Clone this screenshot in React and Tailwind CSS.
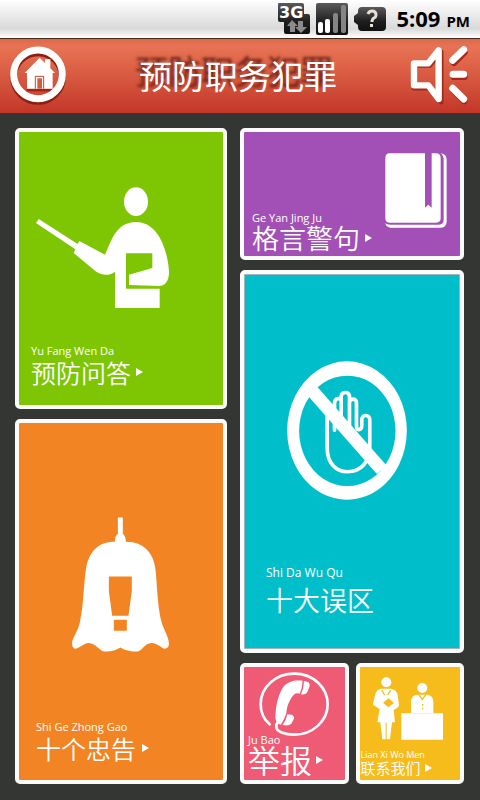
const CJK = "font-['Noto_Sans_CJK_SC','Noto_Sans',sans-serif]";
const LATIN = "font-['Open_Sans','Noto_Sans',sans-serif]";

function StatusBar() {
  return (
    <div className="flex h-[38px] items-center justify-end bg-linear-to-b from-white via-[#dadada] via-75% to-white pr-[10px]">
      <svg width="32" height="32" viewBox="0 0 32 32" className="mr-[6px]" aria-label="3G">
        <defs>
          <linearGradient id="dark" x1="0" y1="0" x2="0" y2="1">
            <stop offset="0" stopColor="#5a5a5a" />
            <stop offset="0.6" stopColor="#1e1e1e" />
            <stop offset="1" stopColor="#111" />
          </linearGradient>
        </defs>
        <path d="M1 0h23q2 0 2 2v9h4q2 0 2 2v16q0 2-2 2H8q-2 0-2-2V19H2q-2 0-2-2V1q0-1 1-1z" fill="url(#dark)" />
        <text x="1" y="15" fontFamily="DejaVu Sans" fontWeight="bold" fontSize="16" fill="#fff">3G</text>
        <path d="M14 17l6 6h-3v6h-5v-6H9z" fill="#8b8b8b" />
        <path d="M23 30l-6-6h3v-6h5v6h4z" fill="#8b8b8b" />
      </svg>
      <svg width="32" height="32" viewBox="0 0 32 32" className="mr-[6px]" aria-label="Signal">
        <rect width="32" height="32" rx="2" fill="url(#dark)" />
        <rect x="2" y="19" width="5" height="11" rx="2" fill="#fff" />
        <rect x="9" y="16" width="5" height="14" rx="2" fill="#fff" />
        <rect x="17" y="10" width="5" height="20" rx="2" fill="#858585" />
        <rect x="25" y="2" width="5" height="28" rx="2" fill="#858585" />
      </svg>
      <svg width="32" height="24" viewBox="0 0 32 24" className="mr-[10px]" aria-label="Battery unknown">
        <path d="M8 0H28Q32 0 32 4V20Q32 24 28 24H8Q4 24 4 20V18L0 15V9L4 6V4Q4 0 8 0z" fill="url(#dark)" />
        <path d="M14 7Q15 4 18 4Q22 4 22 8Q22 10 20 11Q18 12 18 15" fill="none" stroke="#e8e0d4" strokeWidth="3" />
        <rect x="16" y="17" width="3" height="3" fill="#e8e0d4" />
      </svg>
      <div className={"flex items-baseline gap-[6px] font-bold text-black " + LATIN}>
        <span className="text-[22px] leading-8">5:09</span>
        <span className="text-[15px] leading-8">PM</span>
      </div>
    </div>
  );
}

function Header() {
  return (
    <header className="flex h-[75px] items-center justify-between border-t border-[#4a2a18] bg-linear-to-b from-[#d96a4c] via-[#e87354] via-10% to-[#c33628] pr-[11px] pl-[10px]">
      <button type="button" aria-label="Home">
        <svg width="56" height="60" viewBox="30 137 168 180">
          <circle cx="114" cy="230" r="73" fill="none" stroke="#8c1e12" strokeWidth="21" />
          <path d="M80 266h78v7H80z" fill="#9c2418" />
          <circle cx="114" cy="222" r="73" fill="none" stroke="#fff" strokeWidth="21" />
          <path fill="#fff" d="M119 172L135 188V177h16v27l14 14h-7v47H81v-47h-7z" />
          <path fill="none" stroke="#c2472f" strokeWidth="3" d="M106 265V228H131V265" />
          <path fill="#d65a40" d="M112 234h14v31h-14z" />
        </svg>
      </button>
      <h1 className={"pb-[3px] text-[33px] leading-[48px] font-normal text-white [text-shadow:-4px_-5px_3px_#4a120acc] " + CJK}>预防职务犯罪</h1>
      <button type="button" aria-label="Sound">
        <svg width="59" height="60" viewBox="510 135 177 180">
          <g transform="translate(2 7)" stroke="#a3291b" fill="none" strokeLinejoin="round" strokeLinecap="round">
            <path d="M520 186H567L601 146V296L567 254H520z" strokeWidth="15" />
            <path d="M640 178L671 147M640 220h31M640 262L671 293" strokeWidth="20" />
          </g>
          <g stroke="#fff" fill="none" strokeLinejoin="round" strokeLinecap="round">
            <path d="M522 187H565L596 148V294L565 253H522z" strokeWidth="19" />
            <path d="M638 178L671 146M639 220h32M638 262L671 294" strokeWidth="21" />
          </g>
        </svg>
      </button>
    </header>
  );
}

function TeacherIcon() {
  return (
    <svg width="133" height="121" viewBox="78 50 399 363" aria-hidden="true">
      <ellipse cx="378" cy="94" rx="36" ry="43" fill="#fff" />
      <path
        fill="#fff"
        d="M86 146L203 221L208 212L285 253C303 215 317 155 378 155C445 155 472 238 477 302C478 326 468 347 448 347L357 344V313L427 293V249H348V355H449V413H315V304C296 319 273 314 255 301L191 248L196 237L78 158z"
      />
    </svg>
  );
}

function BellIcon() {
  return (
    <svg width="97" height="135" viewBox="186 52 292 404" aria-hidden="true">
      <path
        fill="#fff"
        fillRule="evenodd"
        d="M324 52H339V102Q348 107 348 125C400 124 434 158 438 215C443 270 445 345 461 382C468 400 478 416 478 434Q476 449 462 447C448 438 438 430 425 430C405 431 399 451 384 456C365 456 350 455 332 444C315 455 297 457 279 455C264 447 257 432 237 430C218 431 208 448 193 447Q185 441 186 427C191 409 207 389 211 360C222 305 220 260 228 207C237 155 264 125 315 125Q315 107 324 102zM297 230H366V274L356 348H307L297 274zM312 360H351V393H312z"
      />
    </svg>
  );
}

function BookIcon() {
  return (
    <svg width="62" height="75" viewBox="450 100 186 225" className="shrink-0" aria-hidden="true">
      <path fill="#fff" d="M464 101H570V264L580 255L590 264V101H603Q617 101 617 115V296Q617 309 603 309H464Q451 309 451 296V115Q451 101 464 101z" />
      <path fill="#fff" d="M617 101Q635 104 635 120V306Q634 323 618 324H466Q453 322 451 311Q456 315 466 315H612Q625 315 626 302V116Q625 106 617 101z" />
    </svg>
  );
}

function StopHandIcon() {
  return (
    <svg width="120" height="139" viewBox="51 63 361 416" aria-hidden="true">
      <g fill="none" stroke="#fff" strokeWidth="11" strokeLinecap="round" strokeLinejoin="round">
        <path d="M172 220V325C172 370 200 395 232 395C275 395 300 365 300 318V238C300 222 276 222 276 238V255C276 272 260 272 260 260V187C260 173 239 173 239 187V255V168C239 153 214 153 214 168V250V184C214 170 194 172 194 190V270" />
      </g>
      <path fillRule="evenodd" fill="#fff" d="M232 63A180 208 0 1 1 231 63zM232 106A145 166 0 1 0 233 106z" />
      <path d="M128 153L336 389" stroke="#fff" strokeWidth="39" />
    </svg>
  );
}

function PhoneIcon() {
  return (
    <svg width="70" height="65" viewBox="72 50 210 195" aria-hidden="true">
      <path
        d="M104 207C84 190 77 168 77 146C77 95 122 55 178 55C235 55 278 97 278 147C278 198 232 238 178 238C148 238 124 228 124 214Q122 204 132 200"
        fill="none"
        stroke="#fff"
        strokeWidth="8"
        strokeLinecap="round"
      />
      <path
        fill="#fff"
        d="M203 76C180 73 159 78 147 92C130 115 122 150 121 188Q124 206 138 208Q148 192 154 174C155 152 165 128 180 115Q186 112 194 115Q202 98 203 76z"
      />
      <path fill="#fff" d="M207 77L219 80Q226 84 223 95L216 112Q211 119 198 117Q207 98 207 77zM157 177L170 178Q179 182 177 190L169 205Q161 213 143 209Q154 194 157 177z" />
    </svg>
  );
}

function ReceptionIcon() {
  return (
    <svg width="70" height="63" viewBox="69 66 210 189" aria-hidden="true">
      <ellipse cx="109" cy="82" rx="15" ry="15" fill="#fff" />
      <path
        fill="#fff"
        fillRule="evenodd"
        d="M94 101H123Q139 104 143 119L147 150Q147 158 131 165L135 202H126L120 253H110V203H107V253H97L91 202H82L89 162L71 151Q68 145 71 137L77 114Q81 103 94 101zM99 143L116 130L132 144L115 157z"
      />
      <path d="M95 106L104 120M122 106L113 120" stroke="#f6bc1c" strokeWidth="4" />
      <circle cx="217" cy="99" r="15" fill="#fff" />
      <path fill="#fff" d="M183 174V139Q185 120 202 119H233Q248 121 250 139V174z" />
      <path d="M207 119L217 134L227 119M218 147v5M218 158v5" fill="none" stroke="#f6bc1c" strokeWidth="4" />
      <path fill="#fff" d="M154 175H279V254H154z" />
    </svg>
  );
}

function Arrow() {
  return (
    <svg width="7" height="8" viewBox="0 0 7 8" className="shrink-0" aria-hidden="true">
      <path d="M0 0L7 4L0 8z" fill="#fff" />
    </svg>
  );
}

function Caption({ pinyin, title, pinyinClass, titleClass, className, arrow = true }) {
  return (
    <span className={"flex flex-col items-start whitespace-nowrap text-white " + className}>
      <span className={LATIN + " " + pinyinClass}>{pinyin}</span>
      <span className={"flex items-center font-[350] " + CJK + " " + titleClass}>
        {title}
        {arrow && <Arrow />}
      </span>
    </span>
  );
}

const TILE = "flex rounded-[5px] border-4 border-[#fbfbfb] text-left ";

export default function App() {
  return (
    <div className="min-h-screen bg-[#343634]">
      <StatusBar />
      <Header />
      <main className="grid grid-cols-[212fr_224fr] gap-[13px] pt-[15px] pr-4 pb-4 pl-[15px]">
        <div className="flex flex-col gap-[10px]">
          <button type="button" className={TILE + "flex-col bg-[#7ec603] pt-[55px] pb-[19px]"}>
            <span className="pl-[17px]"><TeacherIcon /></span>
            <Caption
              pinyin="Yu Fang Wen Da"
              title="预防问答"
              className="mt-9 pl-3"
              pinyinClass="text-[11px] leading-[14px]"
              titleClass="gap-[5px] text-[25px] leading-[28px]"
            />
          </button>
          <button type="button" className={TILE + "flex-col bg-[#f38423] pt-[94px] pb-[18px]"}>
            <span className="pl-[53px]"><BellIcon /></span>
            <Caption
              pinyin="Shi Ge Zhong Gao"
              title="十个忠告"
              className="mt-[68px] pl-[17px]"
              pinyinClass="text-[11px] leading-[14px]"
              titleClass="gap-[6px] text-[25px] leading-[28px]"
            />
          </button>
        </div>
        <div className="flex flex-col gap-[10px]">
          <button type="button" className={TILE + "items-start justify-between bg-[#a250b5] pt-[21px] pr-[13px] pb-[5px] pl-2"}>
            <Caption
              pinyin="Ge Yan Jing Ju"
              title="格言警句"
              className="mt-[58px]"
              pinyinClass="text-[11px] leading-[14px]"
              titleClass="gap-[5px] text-[27px] leading-[26px]"
            />
            <BookIcon />
          </button>
          <button type="button" className={TILE + "flex-col bg-[#00bfca] pt-[87px] pb-[29px] inset-ring inset-ring-[#9fb4bd]"}>
            <span className="pl-[43px]"><StopHandIcon /></span>
            <Caption
              pinyin="Shi Da Wu Qu"
              title="十大误区"
              className="mt-[66px] pl-[22px]"
              pinyinClass="text-[12px] leading-[14px]"
              titleClass="text-[27px] leading-[40px]"
              arrow={false}
            />
          </button>
          <div className="grid grid-cols-2 gap-[7px]">
            <button type="button" className={TILE + "flex-col bg-[#ef5a74] pt-[5px] pb-2"}>
              <span className="pl-[15px]"><PhoneIcon /></span>
              <Caption
                pinyin="Ju Bao"
                title="举报"
                className="-mt-1 pl-1"
                pinyinClass="text-[11px] leading-[14px]"
                titleClass="gap-1 text-[32px] leading-[25px]"
              />
            </button>
            <button type="button" className={TILE + "flex-col bg-[#f6bc1c] pt-[10px] pb-1"}>
              <span className="pl-[13px]"><ReceptionIcon /></span>
              <Caption
                pinyin="Lian Xi Wo Men"
                title="联系我们"
                className="mt-[10px] pl-px"
                pinyinClass="text-[9px] leading-[10px]"
                titleClass="gap-1 text-[15px] leading-4"
              />
            </button>
          </div>
        </div>
      </main>
    </div>
  );
}
